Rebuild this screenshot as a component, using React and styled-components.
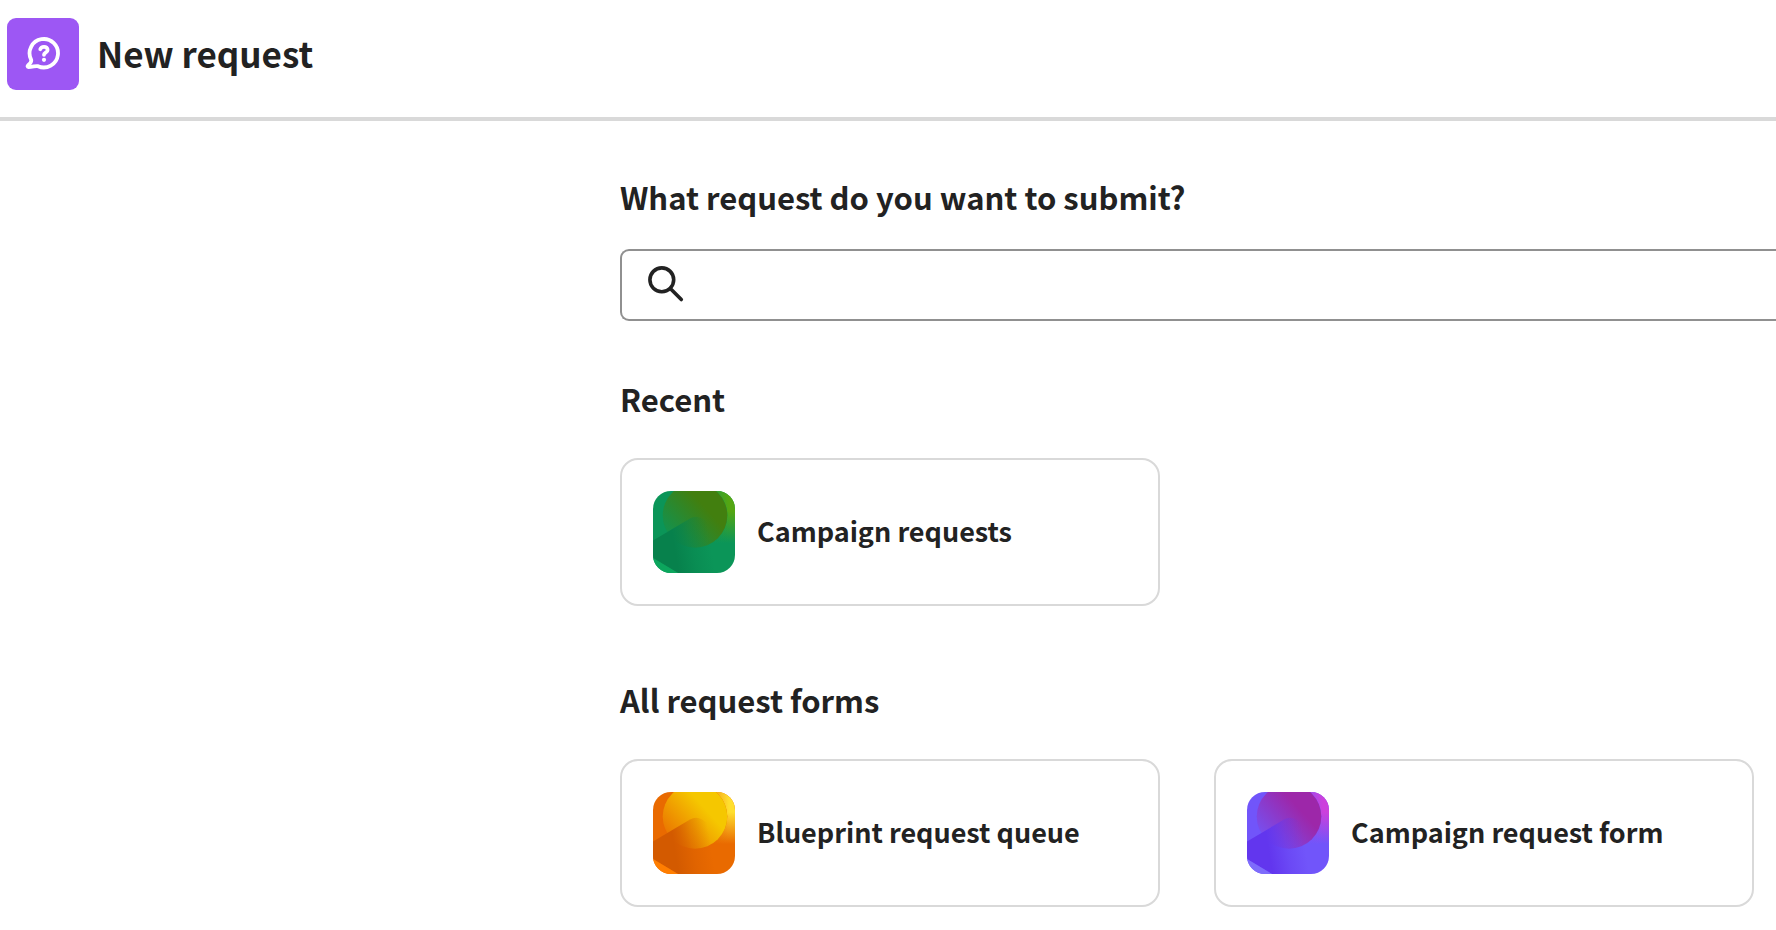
import React, { useId } from "react";
import styled, { createGlobalStyle } from "styled-components";

const GlobalStyle = createGlobalStyle`
  *, *::before, *::after { box-sizing: border-box; }
  body {
    margin: 0;
    background: #fff;
    color: #222;
    font-family: "Noto Sans CJK JP", "Noto Sans", sans-serif;
    font-weight: 700;
  }
`;

const Page = styled.div`
  min-height: 100vh;
  overflow-x: clip;
`;

const Header = styled.header`
  display: flex;
  align-items: center;
  gap: 18px;
  padding: 18px 7px 27px;
  border-bottom: 4px solid #d9d9d9;
`;

const AppBadge = styled.div`
  display: flex;
  align-items: center;
  justify-content: center;
  width: 72px;
  height: 72px;
  border-radius: 9px;
  background: #9d57f4;
`;

const Title = styled.h1`
  margin: 0;
  padding-bottom: 2px;
  font-size: 35px;
  line-height: 48px;
  font-weight: 700;
`;

const Main = styled.main`
  padding: 54px 0 22px 620px;
`;

const Heading = styled.h2`
  margin: 0;
  font-size: 31px;
  line-height: 44px;
  font-weight: 700;
`;

const HeadingLabel = styled.label`
  display: block;
`;

const SearchField = styled.div`
  display: flex;
  align-items: center;
  gap: 20px;
  height: 72px;
  margin-top: 30px;
  padding-left: 24px;
  border: 2px solid #909090;
  border-right: 0;
  border-radius: 9px 0 0 9px;
`;

const SearchInput = styled.input`
  flex: 1;
  min-width: 0;
  height: 100%;
  padding: 0;
  border: 0;
  outline: 0;
  background: transparent;
  color: inherit;
  font: inherit;
  font-size: 27px;
`;

const Section = styled.section`
  margin-top: ${(p) => p.$space}px;
`;

const CardGrid = styled.div`
  display: grid;
  grid-template-columns: repeat(auto-fill, 540px);
  gap: 54px;
  margin-top: 37px;
`;

const Card = styled.a`
  display: flex;
  align-items: center;
  gap: 22px;
  height: 148px;
  padding: 0 31px;
  border: 2px solid #d9d9d9;
  border-radius: 18px;
  color: inherit;
  text-decoration: none;
`;

const CardName = styled.span`
  padding-bottom: 2px;
  font-size: 27px;
  line-height: 40px;
  white-space: nowrap;
`;

const ThumbSvg = styled.svg`
  flex: none;
  width: 82px;
  height: 82px;
  border-radius: 18px;
`;

const palettes = {
  green: { base: "#0b9558", glow: "#54a612", disc: "#427f0f", facet: "#07814c", corner: "#0ca65d" },
  orange: { base: "#e96a00", glow: "#ffdf2e", disc: "#f5c700", facet: "#d35a00", corner: "#ff7e00" },
  violet: { base: "#7155fa", glow: "#cc41dc", disc: "#9d27a9", facet: "#6236ee", corner: "#7e6cfb" },
};

function Thumb({ tone }) {
  const id = useId();
  const c = palettes[tone];
  return (
    <ThumbSvg viewBox="0 0 82 82" aria-hidden="true">
      <defs>
        <linearGradient id={`${id}g`} x1="0" y1="20" x2="0" y2="52" gradientUnits="userSpaceOnUse">
          <stop offset="0" stopColor={c.glow} />
          <stop offset="1" stopColor={c.glow} stopOpacity="0" />
        </linearGradient>
        <linearGradient id={`${id}h`} x1="58" y1="0" x2="76" y2="0" gradientUnits="userSpaceOnUse">
          <stop offset="0" stopColor={c.base} />
          <stop offset="1" stopColor={c.base} stopOpacity="0" />
        </linearGradient>
        <linearGradient id={`${id}d`} x1="57" y1="22" x2="18" y2="57" gradientUnits="userSpaceOnUse">
          <stop offset="0" stopColor={c.disc} />
          <stop offset="1" stopColor={c.disc} stopOpacity="0" />
        </linearGradient>
        <linearGradient id={`${id}f`} x1="22" y1="60" x2="58" y2="54" gradientUnits="userSpaceOnUse">
          <stop offset="0" stopColor={c.facet} />
          <stop offset="0.5" stopColor={c.facet} stopOpacity="0.4" />
          <stop offset="1" stopColor={c.facet} stopOpacity="0" />
        </linearGradient>
      </defs>
      <rect width="82" height="82" fill={c.base} />
      <rect x="48" width="34" height="54" fill={`url(#${id}g)`} />
      <rect x="48" width="34" height="54" fill={`url(#${id}h)`} opacity="0.6" />
      <circle cx="42" cy="24.5" r="32.3" fill={c.base} />
      <circle cx="42" cy="24.5" r="32.3" fill={`url(#${id}d)`} />
      <path d="M0 49.5 37 27.5Q43 24 49 27.5L82 47V82H25L0 67Z" fill={`url(#${id}f)`} />
      <path d="M0 67 25 82H0Z" fill={c.corner} />
    </ThumbSvg>
  );
}

function RequestIcon() {
  return (
    <svg width="36" height="36" viewBox="0 0 36 36" fill="none" stroke="#fff" strokeWidth="3.8" strokeLinecap="round" strokeLinejoin="round" aria-hidden="true">
      <path d="M6.1 23.6A14.2 14.2 0 1 1 13 30.2C10.5 29.6 8 31 3.4 31C2.4 31 2.4 30.2 3 29.4C5.2 27.5 7 26 6.1 23.6Z" />
      <path d="M15.3 13.3C15.8 11.6 17.2 10.8 19 10.8C21.2 10.8 22.6 12.2 22.6 14C22.6 16.8 19 16.6 19 18.8" />
      <circle cx="19" cy="23.8" r="2.1" fill="#fff" stroke="none" />
    </svg>
  );
}

function SearchIcon() {
  return (
    <svg width="38" height="38" viewBox="0 0 38 38" fill="none" stroke="#222" strokeWidth="3.6" strokeLinecap="round" aria-hidden="true">
      <circle cx="15.8" cy="13.8" r="11.9" />
      <path d="M24.3 22.5 35.3 33.5" />
    </svg>
  );
}

function RequestCard({ name, tone }) {
  return (
    <Card href="#">
      <Thumb tone={tone} />
      <CardName>{name}</CardName>
    </Card>
  );
}

export default function App() {
  return (
    <Page>
      <GlobalStyle />
      <Header>
        <AppBadge>
          <RequestIcon />
        </AppBadge>
        <Title>New request</Title>
      </Header>
      <Main>
        <Heading>
          <HeadingLabel htmlFor="request-search">What request do you want to submit?</HeadingLabel>
        </Heading>
        <SearchField>
          <SearchIcon />
          <SearchInput id="request-search" type="text" />
        </SearchField>
        <Section $space={56}>
          <Heading>Recent</Heading>
          <CardGrid>
            <RequestCard name="Campaign requests" tone="green" />
          </CardGrid>
        </Section>
        <Section $space={72}>
          <Heading>All request forms</Heading>
          <CardGrid>
            <RequestCard name="Blueprint request queue" tone="orange" />
            <RequestCard name="Campaign request form" tone="violet" />
          </CardGrid>
        </Section>
      </Main>
    </Page>
  );
}
